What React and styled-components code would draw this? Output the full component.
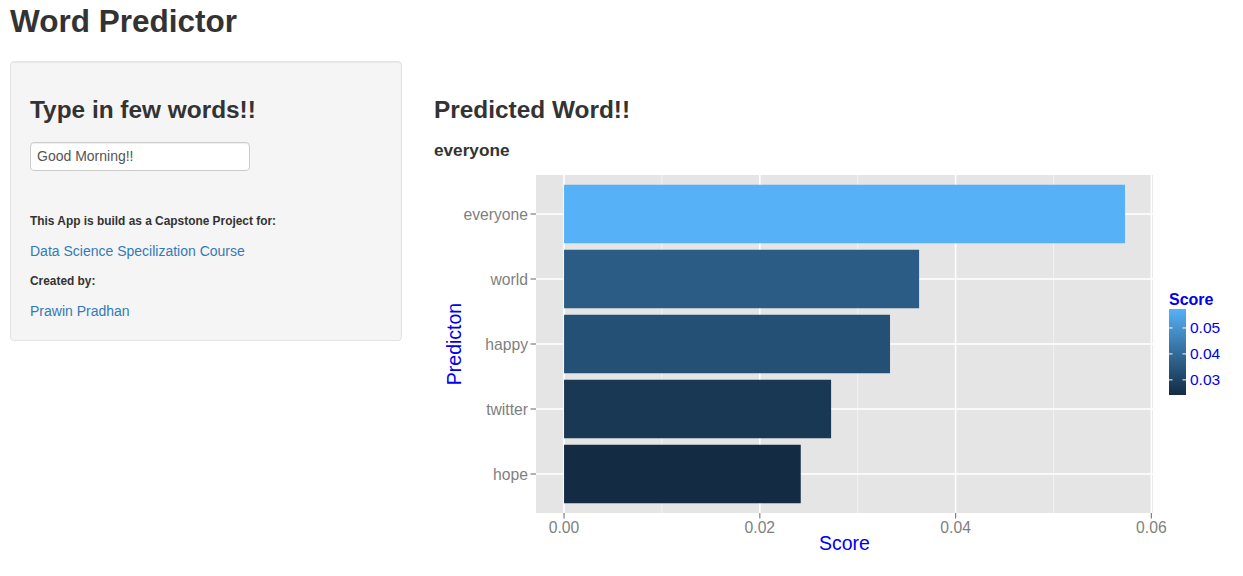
import React from "react";
import styled, { createGlobalStyle } from "styled-components";

/* Word Predictor
 *
 * Shiny-style sidebar page: input well on the left, ggplot-like bar chart on the right.
 */

const predictions = [
  { word: "everyone", score: 0.0573 },
  { word: "world", score: 0.03627 },
  { word: "happy", score: 0.0333 },
  { word: "twitter", score: 0.02728 },
  { word: "hope", score: 0.02418 },
];

const LOW = [0x13, 0x2b, 0x43];
const HIGH = [0x56, 0xb1, 0xf7];

// plot panel, in page pixels
const panel = { left: 536, top: 175, right: 1153, bottom: 513 };
const xZero = 564.05;
const xPerUnit = 9789;
const rowStep = 65;
const barHeight = 58.5;

const minScore = Math.min(...predictions.map((p) => p.score));
const maxScore = Math.max(...predictions.map((p) => p.score));

const mix = (t) => {
  const c = LOW.map((lo, i) => Math.round(lo + (HIGH[i] - lo) * t));
  return `rgb(${c[0]},${c[1]},${c[2]})`;
};

const xOf = (v) => xZero + v * xPerUnit;
const yOf = (i) => panel.top + 0.6 * rowStep + i * rowStep;

// colour bar
const bar = { left: 1169, top: 309, width: 17, height: 86 };
const barY = (v) => bar.top + ((maxScore - v) / (maxScore - minScore)) * bar.height;

const App = () => {
  return (
    <>
      <GlobalStyle />
      <StyledTitle>Word Predictor</StyledTitle>
      <StyledLayout>
        <StyledWell>
          <StyledHeading>Type in few words!!</StyledHeading>
          <StyledInput type="text" defaultValue="Good Morning!!" />
          <StyledLabel isFirst>This App is build as a Capstone Project for:</StyledLabel>
          <StyledLink href="#">Data Science Specilization Course</StyledLink>
          <StyledLabel>Created by:</StyledLabel>
          <StyledLink href="#">Prawin Pradhan</StyledLink>
        </StyledWell>
        <StyledMain>
          <StyledHeading isMain>Predicted Word!!</StyledHeading>
          <StyledWord>everyone</StyledWord>
          <ScoreChart />
        </StyledMain>
      </StyledLayout>
    </>
  );
};

const ScoreChart = () => {
  const major = [0, 0.02, 0.04, 0.06];
  const minor = [0.01, 0.03, 0.05];
  const legendTicks = [0.05, 0.04, 0.03];
  return (
    <StyledChart width="799" height="395" viewBox="434 165 799 395">
      <defs>
        <linearGradient id="scoreGrad" x1="0" y1="0" x2="0" y2="1">
          <stop offset="0" stopColor="#56B1F7" />
          <stop offset="1" stopColor="#132B43" />
        </linearGradient>
      </defs>
      <rect
        x={panel.left}
        y={panel.top}
        width={panel.right - panel.left}
        height={panel.bottom - panel.top}
        fill="#E5E5E5"
      />
      {minor.map((v) => (
        <line key={v} x1={xOf(v)} x2={xOf(v)} y1={panel.top} y2={panel.bottom} stroke="#F2F2F2" strokeWidth="1" />
      ))}
      {major.map((v) => (
        <line key={v} x1={xOf(v)} x2={xOf(v)} y1={panel.top} y2={panel.bottom} stroke="#fff" strokeWidth="1.6" />
      ))}
      {predictions.map((p, i) => (
        <line key={p.word} x1={panel.left} x2={panel.right} y1={yOf(i)} y2={yOf(i)} stroke="#fff" strokeWidth="1.6" />
      ))}
      {predictions.map((p, i) => (
        <rect
          key={p.word}
          x={xZero}
          y={yOf(i) - barHeight / 2}
          width={p.score * xPerUnit}
          height={barHeight}
          fill={mix((p.score - minScore) / (maxScore - minScore))}
        />
      ))}

      {/* y axis */}
      {predictions.map((p, i) => (
        <g key={p.word}>
          <line x1={530.5} x2={panel.left} y1={yOf(i)} y2={yOf(i)} stroke="#7F7F7F" strokeWidth="1.2" />
          <AxisText x={528} y={yOf(i) + 5.5} textAnchor="end">{p.word}</AxisText>
        </g>
      ))}
      <TitleText transform={`translate(460.5, ${(panel.top + panel.bottom) / 2}) rotate(-90)`} textAnchor="middle">
        Predicton
      </TitleText>

      {/* x axis */}
      {major.map((v) => (
        <g key={v}>
          <line x1={xOf(v)} x2={xOf(v)} y1={panel.bottom} y2={518.5} stroke="#7F7F7F" strokeWidth="1.2" />
          <AxisText x={xOf(v)} y={532.5} textAnchor="middle">{v.toFixed(2)}</AxisText>
        </g>
      ))}
      <TitleText x={(panel.left + panel.right) / 2} y={550} textAnchor="middle">Score</TitleText>

      {/* legend */}
      <LegendTitle x={bar.left} y={305}>Score</LegendTitle>
      <rect x={bar.left} y={bar.top} width={bar.width} height={bar.height} fill="url(#scoreGrad)" />
      {legendTicks.map((v) => (
        <g key={v}>
          <line x1={bar.left} x2={bar.left + 3.5} y1={barY(v)} y2={barY(v)} stroke="#fff" strokeWidth="1" />
          <line x1={bar.left + bar.width - 3.5} x2={bar.left + bar.width} y1={barY(v)} y2={barY(v)} stroke="#fff" strokeWidth="1" />
          <LegendText x={1190} y={barY(v) + 5.3}>{v.toFixed(2)}</LegendText>
        </g>
      ))}
    </StyledChart>
  );
};

const GlobalStyle = createGlobalStyle`
  body {
    margin: 0;
    background: #fff;
    color: #333;
    font-family: "Liberation Sans", Arial, sans-serif;
    font-size: 14px;
  }
`;
const StyledTitle = styled.h1`
  margin: 4px 0 22px 10px;
  font-size: 31.5px;
  line-height: 1.1;
  font-weight: 700;
  color: #333;
`;
const StyledLayout = styled.div`
  display: flex;
  align-items: flex-start;
  gap: 32px;
  padding: 0 10px;
`;
const StyledWell = styled.div`
  box-sizing: border-box;
  flex: 0 0 392px;
  width: 392px;
  display: flex;
  flex-direction: column;
  align-items: flex-start;
  padding: 19px 19px 19px;
  background: #f5f5f5;
  border: 1px solid #e3e3e3;
  border-radius: 4px;
  box-shadow: inset 0 1px 1px rgba(0, 0, 0, 0.05);
`;
const StyledHeading = styled.h3`
  margin: ${(p) => (p.isMain ? "36.5px" : "16.5px")} 0 0;
  font-size: 24.4px;
  line-height: 1.1;
  font-weight: 700;
  color: #333;
`;
const StyledInput = styled.input`
  box-sizing: border-box;
  width: 220px;
  height: 29px;
  margin-top: 18px;
  padding: 4px 6px;
  border: 1px solid #ccc;
  border-radius: 4px;
  background: #fff;
  box-shadow: inset 0 1px 1px rgba(0, 0, 0, 0.075);
  font-family: "Liberation Sans", Arial, sans-serif;
  font-size: 14px;
  color: #555;
  outline: none;
`;
const StyledLabel = styled.div`
  margin-top: ${(p) => (p.isFirst ? "40px" : "10px")};
  font-size: 11.9px;
  line-height: 20px;
  font-weight: 700;
  color: #333;
`;
const StyledLink = styled.a`
  margin-top: 10px;
  font-size: 14px;
  line-height: 20px;
  color: #337ab7;
  text-decoration: none;
`;
const StyledMain = styled.div`
  flex: 1;
  min-width: 0;
  display: flex;
  flex-direction: column;
  align-items: flex-start;
`;
const StyledWord = styled.h4`
  margin: 17.5px 0 0;
  font-size: 17.2px;
  line-height: 1.1;
  font-weight: 700;
  color: #333;
`;
const StyledChart = styled.svg`
  display: block;
  margin-top: 4.8px;
  overflow: visible;
  font-family: "Liberation Sans", Arial, sans-serif;
`;
const AxisText = styled.text`
  font-size: 15.7px;
  fill: #7f7f7f;
`;
const TitleText = styled.text`
  font-size: 19.5px;
  fill: #0000ee;
`;
const LegendTitle = styled.text`
  font-size: 16px;
  font-weight: 700;
  fill: #0000ee;
`;
const LegendText = styled.text`
  font-size: 15.5px;
  fill: #0000ee;
`;

export default App;
